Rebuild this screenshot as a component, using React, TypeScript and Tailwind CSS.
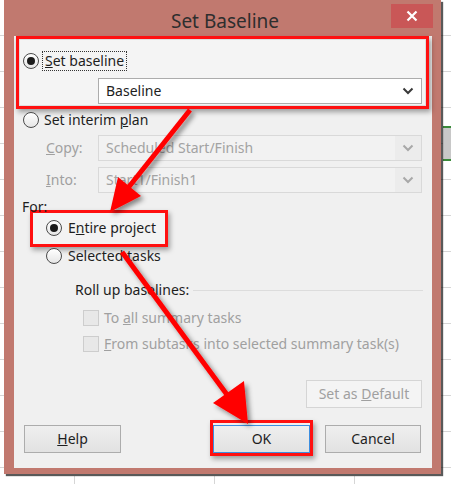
import React from 'react';

const Radio = ({ checked }: { checked?: boolean }) => (
  <span className="w-[16px] h-[16px] rounded-full border border-[#4a4a4a] bg-gradient-to-b from-white to-[#e6e6e6] flex items-center justify-center shrink-0">
    {checked && <span className="w-[8px] h-[8px] rounded-full bg-[#1b1b1b]" />}
  </span>
);

const Chevron = ({ color }: { color: string }) => (
  <svg width="12" height="8" viewBox="0 0 12 8">
    <path d="M1.5 1.5 L6 6 L10.5 1.5" fill="none" stroke={color} strokeWidth="2" />
  </svg>
);

const Combo = ({ text, disabled }: { text: string; disabled?: boolean }) => (
  <div
    className={`w-[324px] h-[26px] border flex items-center ${
      disabled ? 'border-[#d9d9d9] bg-[#ececec] text-[#a3a3a3]' : 'border-[#acacac] bg-white text-[#1e1e1e]'
    }`}
  >
    <div className={`flex-1 h-full flex items-center pl-[7px] ${disabled ? 'bg-[#f2f2f2]' : ''}`}>{text}</div>
    <div className="w-[26px] h-full flex items-center justify-center">
      <Chevron color={disabled ? '#a8a8a8' : '#3a3a3a'} />
    </div>
  </div>
);

const Check = ({ children }: { children: React.ReactNode }) => (
  <div className="flex items-center h-[18px] pl-[69px] gap-[5px] text-[#a0a0a0]">
    <span className="w-[16px] h-[16px] border border-[#cdcdcd] bg-[#e8e8e8] shrink-0" />
    <span>{children}</span>
  </div>
);

const Btn = ({ children, className }: { children: React.ReactNode; className?: string }) => (
  <div
    className={`h-[28px] flex items-center justify-center border bg-gradient-to-b from-[#efefef] to-[#e2e2e2] text-[#1e1e1e] ${className ?? ''}`}
  >
    <span>{children}</span>
  </div>
);

export default function App() {
  return (
    <div className="relative w-[451px] h-[484px] overflow-hidden bg-white font-['Noto_Sans',sans-serif] text-[14px] leading-[18px] bg-[repeating-linear-gradient(to_bottom,transparent_0,transparent_35px,#d6d6d6_35px,#d6d6d6_36px)]">
      {/* spreadsheet bits behind the dialog */}
      <div className="absolute left-0 top-[476px] w-[451px] h-[8px] bg-white flex">
        <div className="w-[75px] border-r border-[#d6d6d6]" />
        <div className="w-[140px] border-r border-[#d6d6d6]" />
        <div className="w-[140px] border-r border-[#d6d6d6]" />
      </div>
      <div className="absolute left-[443px] top-[126px] w-[8px] h-[35px] border-y-2 border-[#3a8a3a] bg-[#c8c8c8]" />

      {/* dialog */}
      <div className="absolute left-[4px] top-0 w-[437px] h-[474px] bg-[#c1796f] shadow-[2px_2px_1px_rgba(0,0,0,0.65)] flex flex-col pl-[10px] pr-[9px]">
        <div className="relative h-[36px] flex items-center justify-center">
          <span className="text-[19px] text-[#2e2e2e] pt-[6px] pl-[4px]">Set Baseline</span>
          <div className="absolute right-[-1px] top-[4px] w-[42px] h-[24px] bg-[#c95757] flex items-center justify-center">
            <svg width="12" height="12" viewBox="0 0 12 12">
              <path d="M1.5 1.5 L10.5 10.5 M10.5 1.5 L1.5 10.5" stroke="#fff" strokeWidth="2.2" />
            </svg>
          </div>
        </div>

        <div className="relative w-[418px] h-[432px] bg-[#f0f0f0] text-[#1e1e1e]">
          {/* Set baseline box */}
          <div className="ml-[2px] w-[413px] h-[73px] border-[3px] border-[#ff1010] bg-[#f4f4f4] shadow-[2px_3px_5px_rgba(0,0,0,0.35),inset_0_0_0_1px_#dedede] pt-[12px] pl-[4px]">
            <div className="flex items-center h-[20px]">
              <Radio checked />
              <span className="ml-[3px] px-[2px] border border-dotted border-[#333] leading-[18px]">
                <span className="underline">S</span>et baseline
              </span>
            </div>
            <div className="ml-[75px] mt-[7px]">
              <Combo text="Baseline" />
            </div>
          </div>

          <div className="flex items-center h-[20px] mt-[1px] ml-[9px] gap-[5px]">
            <Radio />
            <span>
              Set interim <span className="underline">p</span>lan
            </span>
          </div>

          <div className="flex items-center mt-[5px] pl-[32px] text-[#a0a0a0]">
            <span className="w-[52px]">
              <span className="underline">C</span>opy:
            </span>
            <Combo text="Scheduled Start/Finish" disabled />
          </div>
          <div className="flex items-center mt-[6px] pl-[32px] text-[#a0a0a0]">
            <span className="w-[52px]">
              <span className="underline">I</span>nto:
            </span>
            <Combo text="Start1/Finish1" disabled />
          </div>

          <div className="mt-[6px] ml-[8px] h-[16px] leading-[16px]">For:</div>

          {/* Entire project box */}
          <div className="-mt-[5px] ml-[16px] w-[138px] h-[37px] border-[3px] border-[#ff1010] bg-[#f3f3f3] shadow-[2px_3px_5px_rgba(0,0,0,0.35)] pt-[5px] pl-[13px]">
            <div className="flex items-center h-[20px] gap-[6px]">
              <Radio checked />
              <span>
                E<span className="underline">n</span>tire project
              </span>
            </div>
          </div>

          <div className="flex items-center h-[20px] -mt-[1px] ml-[32px] gap-[6px]">
            <Radio />
            <span>
              Selected <span className="underline">t</span>asks
            </span>
          </div>

          <div className="flex items-center h-[18px] mt-[15px] pl-[61px] pr-[9px] gap-[4px]">
            <span>Roll up baselines:</span>
            <span className="flex-1 h-px bg-[#dcdcdc]" />
          </div>

          <div className="mt-[10px]">
            <Check>
              To <span className="underline">a</span>ll summary tasks
            </Check>
          </div>
          <div className="mt-[8px]">
            <Check>
              <span className="underline">F</span>rom subtasks into selected summary task(s)
            </Check>
          </div>

          <div className="mt-[27px] ml-[292px] w-[116px] h-[28px] border border-[#d5d5d5] bg-[#f4f4f4] text-[#a0a0a0] flex items-center justify-center">
            <span>
              Set as <span className="underline">D</span>efault
            </span>
          </div>

          <div className="flex items-end mt-[12px] pl-[10px]">
            <Btn className="w-[97px] border-[#acacac] mb-[3px]">
              <span className="underline">H</span>elp
            </Btn>
            <div className="ml-[89px] w-[103px] border-[3px] border-[#ff1010] pt-[2px] shadow-[2px_3px_5px_rgba(0,0,0,0.35)]">
              <Btn className="w-[97px] border-[#3c8ee0]">OK</Btn>
            </div>
            <Btn className="ml-[12px] w-[96px] border-[#acacac] mb-[3px]">Cancel</Btn>
          </div>
        </div>
      </div>

      {/* arrows */}
      <svg className="absolute left-0 top-0 pointer-events-none" width="451" height="484" viewBox="0 0 451 484">
        <defs>
          <filter id="sh" x="-20%" y="-20%" width="140%" height="140%">
            <feDropShadow dx="3" dy="3" stdDeviation="2.5" floodColor="#000" floodOpacity="0.45" />
          </filter>
        </defs>
        <g filter="url(#sh)" fill="#ff0000" stroke="#ff0000">
          <line x1="190" y1="110" x2="128" y2="188" strokeWidth="5" />
          <polygon points="110,212 141,196 118,177" stroke="none" />
          <line x1="122" y1="252" x2="228" y2="396" strokeWidth="5" />
          <polygon points="248,424 244,381 213,403" stroke="none" />
        </g>
      </svg>
    </div>
  );
}
